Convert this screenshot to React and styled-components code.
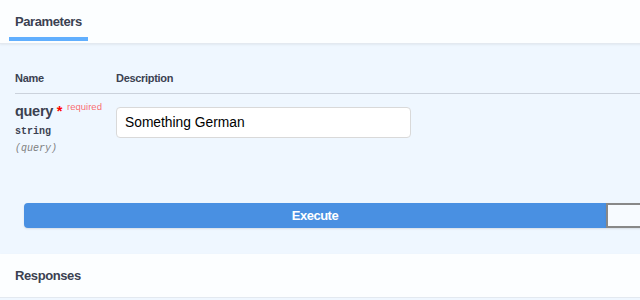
import styled, { createGlobalStyle } from "styled-components"

const GlobalStyle = createGlobalStyle`
  html, body {
    margin: 0;
    padding: 0;
    overflow: hidden;
  }
  body {
    background: #eff7ff;
    font-family: "Liberation Sans", Arial, sans-serif;
    color: #3b4151;
  }
`

function App() {
    return (
        <>
            <GlobalStyle />
            <Opblock>
                <SectionHeader>
                    <Tab>
                        <TabLabel>Parameters</TabLabel>
                        <TabLine />
                    </Tab>
                </SectionHeader>

                <TableWrap>
                    <HeadRow>
                        <HeadCell>Name</HeadCell>
                        <HeadCell>Description</HeadCell>
                    </HeadRow>
                    <ParamRow>
                        <NameCell>
                            <ParamName>
                                query<Star>&nbsp;*</Star>
                                <Required>required</Required>
                            </ParamName>
                            <ParamType>string</ParamType>
                            <ParamIn>(query)</ParamIn>
                        </NameCell>
                        <DescCell>
                            <ParamInput type="text" defaultValue="Something German" />
                        </DescCell>
                    </ParamRow>
                </TableWrap>

                <BtnGroup>
                    <Button variant="execute">Execute</Button>
                    <Button variant="clear" aria-label="Clear" />
                </BtnGroup>

                <SectionHeader center>
                    <SectionTitle>Responses</SectionTitle>
                </SectionHeader>
            </Opblock>
        </>
    )
}

export default App

const Opblock = styled.div`
    width: 1212px;
    background: #eff7ff;
`

const SectionHeader = styled.div`
    box-sizing: border-box;
    height: 44px;
    display: flex;
    align-items: ${(p) => (p.center ? "center" : "flex-end")};
    padding: ${(p) => (p.center ? "0 0 0 15px" : "0 0 2px 9px")};
    background: rgba(255, 255, 255, 0.8);
    border-bottom: 1px solid #e3e9f0;
    box-shadow: 0 1px 2px rgba(0, 0, 0, 0.06);
`

const Tab = styled.div`
    display: flex;
    flex-direction: column;
`

const TabLabel = styled.h4`
    margin: 0;
    padding-left: 6px;
    font-size: 13px;
    letter-spacing: -0.4px;
    line-height: 16px;
    font-weight: 700;
    color: #3b4151;
`

const TabLine = styled.div`
    width: 79px;
    height: 4px;
    margin-top: 7px;
    background: #61affe;
`

const SectionTitle = styled.h4`
    margin: 0;
    font-size: 13px;
    letter-spacing: -0.4px;
    font-weight: 700;
    color: #3b4151;
`

const TableWrap = styled.div`
    padding: 21px 0 0 15px;
`

const HeadRow = styled.div`
    display: grid;
    grid-template-columns: 101px 1fr;
    border-bottom: 1px solid rgba(59, 65, 81, 0.2);
`

const HeadCell = styled.div`
    padding: 5px 0 7px;
    font-size: 11px;
    letter-spacing: -0.3px;
    line-height: 16px;
    font-weight: 700;
    color: #3b4151;
`

const ParamRow = styled.div`
    display: grid;
    grid-template-columns: 101px 1fr;
    height: 72px;
`

const NameCell = styled.div`
    padding-top: 8px;
`

const ParamName = styled.div`
    font-size: 14.5px;
    letter-spacing: -0.3px;
    line-height: 18px;
    font-weight: 700;
    color: #3b4151;
    white-space: nowrap;
`

const Star = styled.span`
    color: red;
`

const Required = styled.span`
    position: relative;
    top: -6px;
    padding-left: 5px;
    font-size: 9.5px;
    letter-spacing: 0;
    font-weight: 400;
    color: rgba(255, 0, 0, 0.6);
`

const ParamType = styled.div`
    padding-top: 1px;
    font-family: "Liberation Mono", "DejaVu Sans Mono", monospace;
    font-size: 10px;
    line-height: 17px;
    font-weight: 700;
    color: #3b4151;
`

const ParamIn = styled.div`
    font-family: "Liberation Mono", "DejaVu Sans Mono", monospace;
    font-size: 10px;
    line-height: 17px;
    font-style: italic;
    color: #808080;
`

const DescCell = styled.div`
    padding-top: 13px;
`

const ParamInput = styled.input`
    box-sizing: border-box;
    width: 295px;
    height: 31px;
    padding: 0 8px;
    border: 1px solid #d9d9d9;
    border-radius: 4px;
    background: #fff;
    font-family: "Liberation Sans", Arial, sans-serif;
    font-size: 13.8px;
    color: #000;
    outline: none;
`

const BtnGroup = styled.div`
    display: flex;
    padding: 37px 24px 26px;
`

const Button = styled.button`
    flex: 0 0 50%;
    box-sizing: border-box;
    height: 25px;
    display: flex;
    align-items: center;
    justify-content: center;
    padding: 0;
    font-family: inherit;
    font-size: 13px;
    letter-spacing: -0.5px;
    font-weight: 700;
    box-shadow: 0 1px 2px rgba(0, 0, 0, 0.1);
    cursor: pointer;
    ${(p) =>
        p.variant === "execute"
            ? `
        background: #4990e2;
        border: 2px solid #4990e2;
        border-radius: 4px 0 0 4px;
        color: #fff;
    `
            : `
        background: #f7fbff;
        border: 2px solid #888;
        border-radius: 0 4px 4px 0;
        color: #3b4151;
    `}
`
